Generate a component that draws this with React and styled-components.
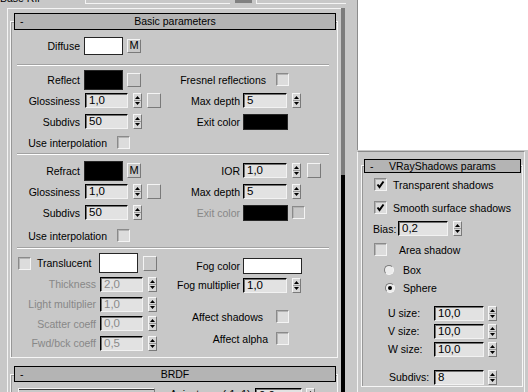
import React from 'react';
import styled, { createGlobalStyle } from 'styled-components';

const GlobalStyle = createGlobalStyle`
  html, body { margin: 0; padding: 0; background: #c8c8c8; }
  body {
    font-family: "Liberation Sans", Arial, sans-serif;
    font-size: 10.5px;
    color: #000;
    overflow: hidden;
  }
`;

const Screen = styled.div`
  display: flex;
  width: 528px;
  height: 392px;
  overflow: hidden;
  background: #c8c8c8;
`;

const LeftColumn = styled.div`
  width: 346px;
  flex: none;
  display: flex;
  flex-direction: column;
`;

const TopStrip = styled.div`
  height: 8px;
  flex: none;
  display: flex;
  align-items: flex-start;
`;

const ClippedText = styled.div`
  width: 80px;
  height: 4px;
  overflow: hidden;
  line-height: 10px;
`;

const ClippedInner = styled.div`
  margin-top: -7px;
  white-space: nowrap;
`;

const TopField = styled.div`
  width: ${p => p.$w}px;
  margin-left: ${p => p.$ml}px;
  height: 3px;
  border-left: 1px solid #f4f4f4;
  border-bottom: 1px solid #f4f4f4;
`;

const TopButton = styled.div`
  width: 17px;
  margin-left: 5px;
  height: 3px;
  background: #808080;
`;

const CommandPanel = styled.div`
  flex: 1;
  min-height: 0;
  display: flex;
`;

const PanelBody = styled.div`
  flex: 1;
  margin-left: 7px;
  border-top: 1px solid #f4f4f4;
  border-left: 1px solid #f4f4f4;
  padding: 0 3px 0 2px;
  overflow: hidden;
`;

const ScrollTrack = styled.div`
  width: 4px;
  flex: none;
  margin-right: 1px;
  display: flex;
  flex-direction: column;
  background: #7c7c7c;
`;

const ScrollThumb = styled.div`
  margin-top: 167px;
  flex: 1;
  background: #000;
`;

const Rollout = styled.div`
  margin-top: ${p => p.$mt}px;
  border: 1px solid #f6f6f6;
  box-shadow: inset 1px 1px 0 #979797;
  padding-bottom: ${p => p.$pb || 0}px;
`;

const RolloutHeader = styled.div`
  box-sizing: border-box;
  height: ${p => p.$h}px;
  margin: ${p => p.$m};
  border: 1px solid #000;
  background: #b4b4b4;
  display: grid;
  grid-template-columns: 24px 1fr 24px;
  align-items: center;
  line-height: 1;
`;

const Minus = styled.span`
  padding-left: 5px;
`;

const Title = styled.span`
  text-align: center;
  white-space: nowrap;
`;

const Section = styled.div`
  display: grid;
  grid-template-columns: 158px 1fr;
  padding: ${p => p.$pt || 0}px 0 0 1px;
`;

const Stack = styled.div`
  display: flex;
  flex-direction: column;
`;

const Separator = styled.div`
  margin: ${p => p.$mt || 0}px 8px 0 6px;
  border-top: 1px solid #a2a2a2;
  border-bottom: 1px solid #fff;
`;

const Row = styled.div`
  display: flex;
  align-items: ${p => p.$top ? 'flex-start' : 'center'};
  height: ${p => p.$h || 21}px;
  margin-top: ${p => p.$mt || 0}px;
  padding-left: ${p => p.$pl || 0}px;
  flex: none;
`;

const Label = styled.span`
  flex: none;
  width: ${p => (p.$w ? `${p.$w}px` : 'auto')};
  margin-left: ${p => p.$ml || 0}px;
  text-align: ${p => p.$align || 'right'};
  white-space: nowrap;
  color: ${p => (p.$off ? '#878787' : '#000')};
`;

const Swatch = styled.div`
  flex: none;
  box-sizing: border-box;
  width: ${p => p.$w}px;
  height: ${p => p.$h}px;
  margin-left: ${p => p.$ml || 0}px;
  background: ${p => p.$c};
  border: 1px solid #262626;
`;

const MapButton = styled.div`
  flex: none;
  box-sizing: border-box;
  width: 14px;
  height: ${p => p.$h || 15}px;
  margin-left: ${p => p.$ml || 0}px;
  background: #c8c8c8;
  border: 1px solid;
  border-color: #f4f4f4 #7a7a7a #7a7a7a #f4f4f4;
  display: flex;
  align-items: center;
  justify-content: center;
  font-size: 11px;
  line-height: 1;
`;

const Field = styled.div`
  flex: none;
  box-sizing: border-box;
  width: ${p => p.$w}px;
  height: 15px;
  margin-left: ${p => p.$ml || 0}px;
  background: #e2e2e2;
  border: 1px solid;
  border-color: #000 #f2f2f2 #f2f2f2 #000;
  box-shadow: inset 1px 1px 0 #707070;
  padding-left: 3px;
  font-size: 11.5px;
  line-height: 13px;
  white-space: nowrap;
  overflow: hidden;
  color: ${p => (p.$off ? '#8a8a8a' : '#000')};
`;

const ArrowBox = styled.div`
  flex: none;
  box-sizing: border-box;
  width: 9px;
  height: 15px;
  margin-left: ${p => p.$ml || 5}px;
  background: #d6d6d6;
  border: 1px solid;
  border-color: #f6f6f6 #7a7a7a #7a7a7a #f6f6f6;
  display: flex;
`;

const Check = styled.div`
  flex: none;
  box-sizing: border-box;
  width: 13px;
  height: 13px;
  margin-left: ${p => p.$ml || 0}px;
  background: ${p => (p.$off ? '#c8c8c8' : '#dcdcdc')};
  border: 1px solid;
  border-color: #8a8a8a #f4f4f4 #f4f4f4 #8a8a8a;
  box-shadow: inset 1px 1px 0 #b4b4b4;
  display: flex;
  align-items: center;
  justify-content: center;
`;

const Radio = styled.div`
  flex: none;
  box-sizing: border-box;
  width: 10px;
  height: 10px;
  border-radius: 50%;
  border: 1px solid;
  border-color: #7a7a7a #f6f6f6 #f6f6f6 #7a7a7a;
  background: #ececec;
  display: flex;
  align-items: center;
  justify-content: center;
  &::after {
    content: '';
    width: 4px;
    height: 4px;
    border-radius: 50%;
    background: ${p => (p.$on ? '#000' : 'transparent')};
  }
`;

const Dropdown = styled.div`
  flex: none;
  box-sizing: border-box;
  width: 137px;
  height: 18px;
  background: #c8c8c8;
  border: 1px solid;
  border-color: #f4f4f4 #7a7a7a #7a7a7a #f4f4f4;
  box-shadow: inset 0 1px 0 #404040;
  padding-left: 4px;
  line-height: 16px;
`;

const RightColumn = styled.div`
  flex: 1;
  display: flex;
  flex-direction: column;
  padding-left: 11px;
`;

const Preview = styled.div`
  height: 150px;
  flex: none;
  background: #fff;
  border-left: 1px solid #8c8c8c;
`;

const ShadowPanel = styled.div`
  flex: 1;
  margin: 1px 4px 0 0;
  border-top: 1px solid #8a8a8a;
  border-left: 1px solid #f4f4f4;
  border-right: 1px solid #f4f4f4;
  padding: 0 1px 0 3px;
`;

const RightBody = styled.div`
  display: flex;
  flex-direction: column;
`;

const Arrows = ({ ml }) => (
  <ArrowBox $ml={ml}>
    <svg width="7" height="13" viewBox="0 0 7 13">
      <path d="M1 5 L3.5 2 L6 5 Z" fill="#000" />
      <path d="M0 6.5 H7" stroke="#9a9a9a" strokeWidth="1" />
      <path d="M1 8 L3.5 11 L6 8 Z" fill="#000" />
    </svg>
  </ArrowBox>
);

const Spinner = ({ value, w = 43, ml = 5, aml, off }) => (
  <>
    <Field $w={w} $ml={ml} $off={off}>{value}</Field>
    <Arrows ml={aml} />
  </>
);

const Tick = () => (
  <svg width="9" height="9" viewBox="0 0 9 9">
    <polyline points="1.5,4.5 3.5,7 7.5,1.5" fill="none" stroke="#000" strokeWidth="2" />
  </svg>
);

export default function App() {
  return (
    <>
      <GlobalStyle />
      <Screen>
        <LeftColumn>
          <TopStrip>
            <ClippedText><ClippedInner>Base Rfl</ClippedInner></ClippedText>
            <TopField $ml={5} $w={145} />
            <TopButton />
            <TopField $ml={4} $w={89} />
          </TopStrip>
          <CommandPanel>
            <PanelBody>
              <Rollout $mt={12} $pb={4}>
                <RolloutHeader $h={17} $m="-9px 1px 0 3px">
                  <Minus>-</Minus>
                  <Title>Basic parameters</Title>
                </RolloutHeader>

                <Section $pt={6}>
                  <Stack>
                    <Row $h={19}>
                      <Label $w={68}>Diffuse</Label>
                      <Swatch $ml={4} $w={39} $h={18} $c="#fff" />
                      <MapButton $ml={4} $h={14}>M</MapButton>
                    </Row>
                  </Stack>
                </Section>

                <Separator $mt={9} />

                <Section $pt={3}>
                  <Stack>
                    <Row>
                      <Label $w={68}>Reflect</Label>
                      <Swatch $ml={4} $w={39} $h={20} $c="#000" />
                      <MapButton $ml={4} $h={14} />
                    </Row>
                    <Row>
                      <Label $w={68}>Glossiness</Label>
                      <Spinner value="1,0" />
                      <MapButton $ml={5} />
                    </Row>
                    <Row>
                      <Label $w={68}>Subdivs</Label>
                      <Spinner value="50" />
                    </Row>
                    <Row>
                      <Label $w={95}>Use interpolation</Label>
                      <Check $ml={10} />
                    </Row>
                  </Stack>
                  <Stack>
                    <Row>
                      <Label $w={96}>Fresnel reflections</Label>
                      <Check $ml={10} />
                    </Row>
                    <Row>
                      <Label $w={70}>Max depth</Label>
                      <Spinner value="5" w={44} ml={3} />
                    </Row>
                    <Row>
                      <Label $w={70}>Exit color</Label>
                      <Swatch $ml={3} $w={45} $h={16} $c="#000" />
                    </Row>
                  </Stack>
                </Section>

                <Separator />

                <Section $pt={5}>
                  <Stack>
                    <Row>
                      <Label $w={68}>Refract</Label>
                      <Swatch $ml={4} $w={39} $h={20} $c="#000" />
                      <MapButton $ml={4}>M</MapButton>
                    </Row>
                    <Row>
                      <Label $w={68}>Glossiness</Label>
                      <Spinner value="1,0" />
                      <MapButton $ml={5} />
                    </Row>
                    <Row>
                      <Label $w={68}>Subdivs</Label>
                      <Spinner value="50" />
                    </Row>
                    <Row $mt={2}>
                      <Label $w={95}>Use interpolation</Label>
                      <Check $ml={10} />
                    </Row>
                  </Stack>
                  <Stack>
                    <Row>
                      <Label $w={70}>IOR</Label>
                      <Spinner value="1,0" w={44} ml={3} />
                      <MapButton $ml={6} />
                    </Row>
                    <Row>
                      <Label $w={70}>Max depth</Label>
                      <Spinner value="5" w={44} ml={3} />
                    </Row>
                    <Row>
                      <Label $w={70} $off>Exit color</Label>
                      <Swatch $ml={3} $w={45} $h={16} $c="#000" />
                      <Check $ml={4} $off />
                    </Row>
                  </Stack>
                </Section>

                <Separator $mt={1} />

                <Section $pt={3}>
                  <Stack>
                    <Row $h={22} $pl={6}>
                      <Check />
                      <Label $ml={6} $w={56} $align="left">Translucent</Label>
                      <Swatch $ml={6} $w={39} $h={20} $c="#fff" />
                      <MapButton $ml={5} />
                    </Row>
                    <Row $h={20}>
                      <Label $w={84} $off>Thickness</Label>
                      <Spinner value="2,0" ml={4} off />
                    </Row>
                    <Row $h={20}>
                      <Label $w={84} $off>Light multiplier</Label>
                      <Spinner value="1,0" ml={4} off />
                    </Row>
                    <Row $h={19}>
                      <Label $w={84} $off>Scatter coeff</Label>
                      <Spinner value="0,0" ml={4} off />
                    </Row>
                    <Row $h={20}>
                      <Label $w={84} $off>Fwd/bck coeff</Label>
                      <Spinner value="0,5" ml={4} off />
                    </Row>
                  </Stack>
                  <Stack>
                    <Row $h={23} $mt={2}>
                      <Label $w={70}>Fog color</Label>
                      <Swatch $ml={3} $w={59} $h={16} $c="#fff" />
                    </Row>
                    <Row $h={16}>
                      <Label $w={70}>Fog multiplier</Label>
                      <Spinner value="1,0" w={44} ml={3} />
                    </Row>
                    <Row $mt={13}>
                      <Label $w={93}>Affect shadows</Label>
                      <Check $ml={13} />
                    </Row>
                    <Row $mt={1}>
                      <Label $w={98}>Affect alpha</Label>
                      <Check $ml={8} />
                    </Row>
                  </Stack>
                </Section>
              </Rollout>

              <Rollout $mt={16}>
                <RolloutHeader $h={16} $m="-9px 1px 0 3px">
                  <Minus>-</Minus>
                  <Title>BRDF</Title>
                </RolloutHeader>
                <Section $pt={6}>
                  <Stack>
                    <Row $h={18} $pl={6} $top>
                      <Dropdown>Blinn</Dropdown>
                    </Row>
                  </Stack>
                  <Stack>
                    <Row $h={18} $top>
                      <Label $w={80}>Anisotropy (-1..1)</Label>
                      <Spinner value="0,0" w={47} ml={5} aml={4} />
                    </Row>
                  </Stack>
                </Section>
              </Rollout>
            </PanelBody>
            <ScrollTrack>
              <ScrollThumb />
            </ScrollTrack>
          </CommandPanel>
        </LeftColumn>

        <RightColumn>
          <Preview />
          <ShadowPanel>
            <Rollout $mt={13}>
              <RolloutHeader $h={14} $m="-7px 1px 0 2px">
                <Minus>-</Minus>
                <Title>VRayShadows params</Title>
              </RolloutHeader>
              <RightBody>
                <Row $h={23} $pl={12}>
                  <Check><Tick /></Check>
                  <Label $ml={6} $align="left">Transparent shadows</Label>
                </Row>
                <Row $h={23} $pl={12}>
                  <Check><Tick /></Check>
                  <Label $ml={6} $align="left">Smooth surface shadows</Label>
                </Row>
                <Row $h={19} $pl={11}>
                  <Label $w={24} $align="left">Bias:</Label>
                  <Spinner value="0,2" w={50} ml={1} />
                </Row>
                <Row $h={23} $pl={12}>
                  <Check />
                  <Label $ml={12} $align="left">Area shadow</Label>
                </Row>
                <Row $h={17} $pl={22}>
                  <Radio />
                  <Label $ml={9} $align="left">Box</Label>
                </Row>
                <Row $h={19} $pl={23}>
                  <Radio $on />
                  <Label $ml={8} $align="left">Sphere</Label>
                </Row>
                <Row $h={18} $mt={7} $pl={26}>
                  <Label $w={41} $align="left">U size:</Label>
                  <Spinner value="10,0" w={50} ml={5} aml={4} />
                </Row>
                <Row $h={18} $pl={26}>
                  <Label $w={41} $align="left">V size:</Label>
                  <Spinner value="10,0" w={50} ml={5} aml={4} />
                </Row>
                <Row $h={18} $pl={26}>
                  <Label $w={41} $align="left">W size:</Label>
                  <Spinner value="10,0" w={50} ml={5} aml={4} />
                </Row>
                <Row $h={18} $mt={10} $pl={27}>
                  <Label $w={40} $align="left">Subdivs:</Label>
                  <Spinner value="8" w={50} ml={5} aml={4} />
                </Row>
              </RightBody>
            </Rollout>
          </ShadowPanel>
        </RightColumn>
      </Screen>
    </>
  );
}
